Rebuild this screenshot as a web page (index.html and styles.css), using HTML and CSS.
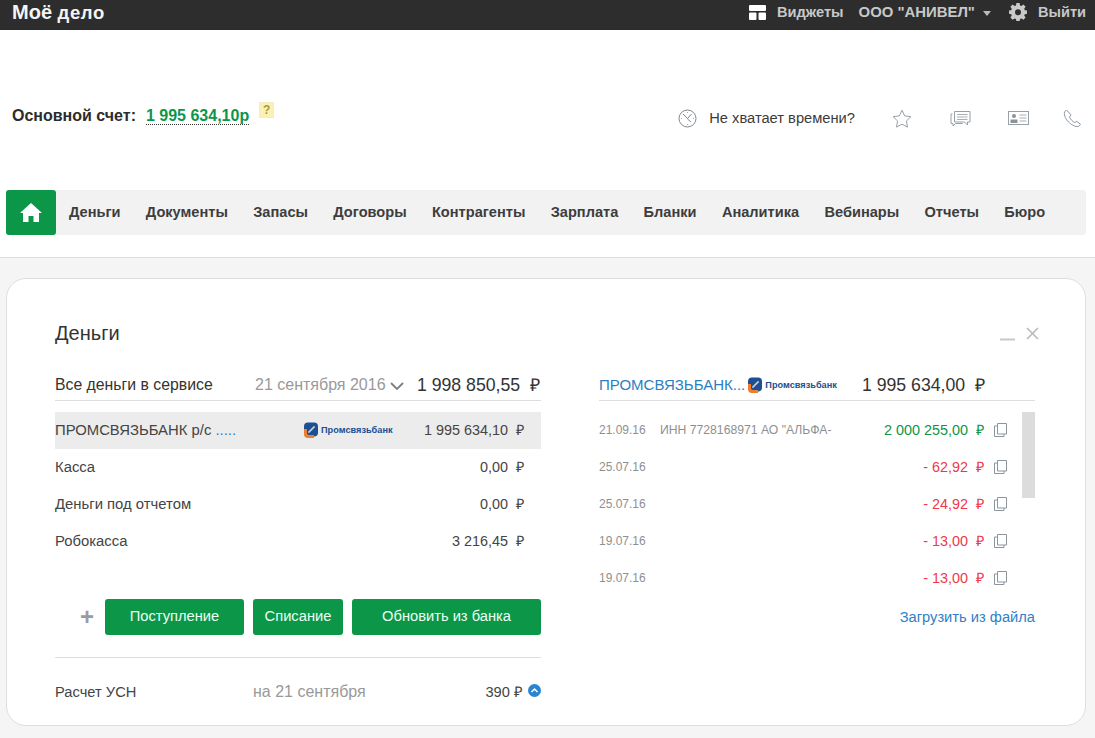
FILE: index.html
```html
<!DOCTYPE html>
<html lang="ru">
<head>
<meta charset="utf-8">
<title>Моё дело</title>
<link rel="stylesheet" href="styles.css">
</head>
<body>
<header class="topbar">
  <div class="logo">Моё <span class="logo-small">дело</span></div>
  <div class="top-actions">
    <svg class="ico-widgets" width="17" height="15" viewBox="0 0 17 15"><rect x="0" y="0" width="17" height="6" rx="1" fill="#fff"/><rect x="0" y="7.500" width="7.500" height="7.500" rx="1" fill="#fff"/><rect x="9.500" y="7.500" width="7.500" height="7.500" rx="1" fill="#fff"/></svg>
    <span class="top-link widgets">Виджеты</span>
    <span class="top-link org">ООО "АНИВЕЛ"</span>
    <svg class="caret" width="8" height="5" viewBox="0 0 8 5"><path d="M0 0h8L4 5z" fill="#bbb"/></svg>
    <svg class="gear" width="18" height="18" viewBox="0 0 18 18"><path fill="#c9c9c9" fill-rule="evenodd" d="M7.400 0h3.200l.4 2.400 1.400.6 2-1.400 2.200 2.200-1.400 2 .6 1.400 2.200.4v3.200l-2.200.4-.6 1.400 1.400 2-2.200 2.200-2-1.400-1.400.6-.4 2.400H7.400l-.4-2.400-1.400-.6-2 1.400-2.200-2.200 1.400-2-.6-1.400L0 10.800V7.600l2.200-.4.6-1.400-1.400-2 2.200-2.200 2 1.400 1.400-.6zM9 6.200a3 3 0 1 0 0 6 3 3 0 0 0 0-6z"/></svg>
    <span class="top-link logout">Выйти</span>
  </div>
</header>

<section class="account">
  <div class="balance">
    <span class="balance-label">Основной счет:</span>
    <span class="balance-value">1 995 634,10р</span>
    <span class="hint">?</span>
  </div>
  <div class="tools">
    <svg class="tool-clock" width="19" height="19" viewBox="0 0 19 19" fill="none" stroke="#7d8791"><circle cx="9.500" cy="9.500" r="8.500"/><path d="M5 5l4.500 4.500L13.500 5M9.500 10l3.500 3"/><path d="M9.500 3v1M9.500 15v1M3 9.500h1M15 9.500h1" stroke="#a5abb1"/></svg>
    <span class="tool-text">Не хватает времени?</span>
    <svg class="tool-star" width="20" height="19" viewBox="0 0 20 19" fill="none" stroke="#98a0a8"><path d="M10 1.200l2.700 5.700 6.200.8-4.500 4.300 1.100 6.100L10 15.200l-5.500 2.900 1.100-6.100L1.100 7.700l6.200-.8z"/></svg>
    <svg class="tool-chat" width="21" height="17" viewBox="0 0 21 17" fill="none" stroke="#98a0a8"><path d="M4.500 1.500h15.500v10.500h-2.500v3l-3-3H4.500z"/><path d="M2.500 4H1v9.500h2v2.500l2.500-2.500h7"/><path d="M7 4.500h10.500M7 7h10.500M7 9.500h10.500" stroke="#a9afb5"/></svg>
    <svg class="tool-card" width="21" height="14" viewBox="0 0 21 14" fill="none" stroke="#98a0a8"><rect x="0.500" y="0.500" width="20" height="13"/><circle cx="6" cy="5" r="2" fill="#8b939b" stroke="none"/><path d="M2.500 12V8.500h7V12z" fill="#8b939b" stroke="none"/><path d="M11.500 4h7M11.500 7h7M11.500 10h7" stroke="#a9afb5"/></svg>
    <svg class="tool-phone" width="19" height="19" viewBox="0 0 19 19" fill="none" stroke="#8e979f"><path d="M3.500 1L1.500 3c-.7 3.800 1.500 7.500 4 10 2.500 2.500 6.500 5 10 4.500l2-2.200-3.700-3-2 1.300c-2-.8-4.500-3.500-5.300-5.700l1.500-2z"/></svg>
  </div>
</section>

<nav class="menu">
  <a class="home"><svg width="22" height="19" viewBox="0 0 22 19"><path fill="#fff" d="M11 0L0 10h3v9h5.500v-6h5v6H19v-9h3z"/></svg></a>
  <a class="menu-item">Деньги</a>
  <a class="menu-item">Документы</a>
  <a class="menu-item">Запасы</a>
  <a class="menu-item">Договоры</a>
  <a class="menu-item">Контрагенты</a>
  <a class="menu-item">Зарплата</a>
  <a class="menu-item">Бланки</a>
  <a class="menu-item">Аналитика</a>
  <a class="menu-item">Вебинары</a>
  <a class="menu-item">Отчеты</a>
  <a class="menu-item">Бюро</a>
</nav>

<main class="content">
  <article class="card">
    <div class="card-head">
      <h2 class="card-title">Деньги</h2>
      <div class="card-controls">
        <svg width="15" height="14" viewBox="0 0 15 14"><path d="M0 12.500h15" stroke="#c8c8c8" stroke-width="2"/></svg>
        <svg width="13" height="13" viewBox="0 0 13 13"><path d="M1 1l11 11M12 1L1 12" stroke="#b9b9b9" stroke-width="1.600"/></svg>
      </div>
    </div>
    <div class="columns">
      <section class="left">
        <div class="col-head">
          <span class="col-title">Все деньги в сервисе</span>
          <span class="col-date">21 сентября 2016</span>
          <svg class="chev" width="14" height="8" viewBox="0 0 14 8" fill="none"><path d="M1 1l6 6 6-6" stroke="#7f7f7f" stroke-width="1.800"/></svg>
          <span class="col-sum">1 998 850,55&nbsp; ₽</span>
        </div>
        <div class="acc-list">
          <div class="acc-row active">
            <span class="acc-name">ПРОМСВЯЗЬБАНК р/с <span class="acc-dots">.....</span></span>
            <span class="bank">
              <svg width="15" height="16" viewBox="0 0 15 16"><rect x="1" y="0.500" width="14" height="14" rx="4" fill="#1d4f91"/><path d="M1 7v5a4 4 0 0 0 4 4h6v-3H6a2 2 0 0 1-2-2V7z" fill="#ef7d2e"/><path d="M5 10h2V8h2V6h2V4" fill="none" stroke="#fff"/></svg>
              <span class="bank-name">Промсвязьбанк</span>
            </span>
            <span class="acc-sum">1 995 634,10&nbsp; ₽</span>
          </div>
          <div class="acc-row"><span class="acc-name">Касса</span><span class="acc-sum">0,00&nbsp; ₽</span></div>
          <div class="acc-row"><span class="acc-name">Деньги под отчетом</span><span class="acc-sum">0,00&nbsp; ₽</span></div>
          <div class="acc-row"><span class="acc-name">Робокасса</span><span class="acc-sum">3 216,45&nbsp; ₽</span></div>
        </div>
        <div class="actions">
          <span class="plus">+</span>
          <a class="btn btn-in">Поступление</a>
          <a class="btn btn-out">Списание</a>
          <a class="btn btn-sync">Обновить из банка</a>
        </div>
        <div class="tax">
          <span class="tax-name">Расчет УСН</span>
          <span class="tax-date">на 21 сентября</span>
          <span class="tax-sum">390&nbsp;₽</span>
          <svg class="tax-toggle" width="13" height="13" viewBox="0 0 13 13"><circle cx="6.500" cy="6.500" r="6.500" fill="#2a84d2"/><path d="M3.500 8l3-3 3 3" fill="none" stroke="#fff" stroke-width="1.500"/></svg>
        </div>
      </section>
      <section class="right">
        <div class="col-head right-head">
          <span class="bank-link">ПРОМСВЯЗЬБАНК...</span>
          <span class="bank">
            <svg width="15" height="16" viewBox="0 0 15 16"><rect x="1" y="0.500" width="14" height="14" rx="4" fill="#1d4f91"/><path d="M1 7v5a4 4 0 0 0 4 4h6v-3H6a2 2 0 0 1-2-2V7z" fill="#ef7d2e"/><path d="M5 10h2V8h2V6h2V4" fill="none" stroke="#fff"/></svg>
            <span class="bank-name">Промсвязьбанк</span>
          </span>
          <span class="col-sum right-sum">1 995 634,00&nbsp; ₽</span>
        </div>
        <div class="ops-wrap">
          <div class="ops">
            <div class="op"><span class="op-date">21.09.16</span><span class="op-desc">ИНН 7728168971 АО "АЛЬФА-</span><span class="op-sum plus-sum">2 000 255,00&nbsp; ₽</span><svg class="copy" width="13" height="14" viewBox="0 0 13 14" fill="none" stroke="#8c949c"><path d="M3.500.5h9V11h-9z"/><path d="M3.500 3H.5v10.500H10V11"/></svg></div>
            <div class="op"><span class="op-date">25.07.16</span><span class="op-desc"></span><span class="op-sum minus-sum">- 62,92&nbsp; ₽</span><svg class="copy" width="13" height="14" viewBox="0 0 13 14" fill="none" stroke="#8c949c"><path d="M3.500.5h9V11h-9z"/><path d="M3.500 3H.5v10.500H10V11"/></svg></div>
            <div class="op"><span class="op-date">25.07.16</span><span class="op-desc"></span><span class="op-sum minus-sum">- 24,92&nbsp; ₽</span><svg class="copy" width="13" height="14" viewBox="0 0 13 14" fill="none" stroke="#8c949c"><path d="M3.500.5h9V11h-9z"/><path d="M3.500 3H.5v10.500H10V11"/></svg></div>
            <div class="op"><span class="op-date">19.07.16</span><span class="op-desc"></span><span class="op-sum minus-sum">- 13,00&nbsp; ₽</span><svg class="copy" width="13" height="14" viewBox="0 0 13 14" fill="none" stroke="#8c949c"><path d="M3.500.5h9V11h-9z"/><path d="M3.500 3H.5v10.500H10V11"/></svg></div>
            <div class="op"><span class="op-date">19.07.16</span><span class="op-desc"></span><span class="op-sum minus-sum">- 13,00&nbsp; ₽</span><svg class="copy" width="13" height="14" viewBox="0 0 13 14" fill="none" stroke="#8c949c"><path d="M3.500.5h9V11h-9z"/><path d="M3.500 3H.5v10.500H10V11"/></svg></div>
          </div>
          <div class="scroll"><div class="scroll-thumb"></div></div>
        </div>
        <a class="upload">Загрузить из файла</a>
      </section>
    </div>
  </article>
</main>
</body>
</html>
```

FILE: styles.css
```css
* { box-sizing: border-box; }
html, body { margin: 0; padding: 0; }
body {
  height: 738px;
  overflow: hidden;
  background: #fff;
  font-family: "Liberation Sans", Arial, sans-serif;
  color: #333;
  font-size: 14px;
}
svg { display: block; flex: none; }

.topbar {
  height: 30px;
  background: #2d2d2d;
  display: flex;
  align-items: center;
  justify-content: space-between;
  padding: 0 9px 6px 12px;
  color: #ccc;
}
.logo { color: #f4f4f4; font-weight: bold; font-size: 20px; line-height: 24px; white-space: nowrap; }
.logo-small { font-size: 18.5px; letter-spacing: 0.6px; }
.top-actions { display: flex; align-items: center; }
.top-link { font-weight: bold; font-size: 14.6px; color: #c8c8c8; white-space: nowrap; }
.org { font-size: 14.9px; }
.ico-widgets { margin-right: 11px; }
.widgets { margin-right: 15px; }
.caret { margin: 2px 0 0 8px; }
.gear { margin: 0 11px 0 18px; }

.account {
  height: 160px;
  display: flex;
  align-items: center;
  justify-content: space-between;
  padding: 0 13px 0 12px;
}
.balance { display: flex; align-items: center; margin-top: 12px; }
.balance-label { font-weight: bold; font-size: 16px; color: #2c2c2c; }
.balance-value {
  margin-left: 10px;
  font-weight: bold;
  font-size: 16px;
  color: #0d964a;
  border-bottom: 1px dotted #333;
  line-height: 17px;
}
.hint {
  margin: -12px 0 0 10px;
  width: 15px;
  height: 16px;
  background: #fbf1b5;
  border: 1px solid #f3eccb;
  color: #a8993f;
  font-weight: bold;
  font-size: 12px;
  line-height: 14px;
  text-align: center;
}
.tools { display: flex; align-items: center; margin-top: 16px; }
.tool-text { margin-left: 12px; font-size: 14.7px; color: #3c3c3c; white-space: nowrap; }
.tool-star { margin-left: 37px; }
.tool-chat { margin-left: 38px; }
.tool-card { margin-left: 37px; }
.tool-phone { margin-left: 34px; }

.menu {
  margin: 0 9px 0 6px;
  height: 45px;
  background: #f2f2f2;
  border-radius: 3px;
  display: flex;
  align-items: center;
}
.home {
  width: 50px;
  height: 45px;
  background: #0c9648;
  border-radius: 3px;
  display: flex;
  align-items: center;
  justify-content: center;
  margin-right: 13px;
}
.menu-item { font-weight: bold; font-size: 14.6px; color: #3d3d3d; margin: -2px 25.3px 0 0; white-space: nowrap; }

.content {
  margin-top: 22px;
  border-top: 1px solid #dedede;
  background: #f5f5f5;
  padding: 20px 9px 0 6px;
  height: 481px;
}
.card {
  height: 448px;
  background: #fff;
  border: 1px solid #dedede;
  border-radius: 20px;
  padding: 0 50px 0 48px;
}
.card-head {
  height: 82px;
  display: flex;
  justify-content: space-between;
  align-items: flex-start;
  padding-top: 42px;
}
.card-title { margin: 0; font-weight: normal; font-size: 20px; line-height: 24px; color: #333; }
.card-controls { display: flex; gap: 11px; align-items: flex-start; margin: 6px -4px 0 0; }

.columns { display: flex; justify-content: space-between; }
.left { width: 486px; }
.right { width: 436px; }

.col-head {
  height: 40px;
  padding-top: 7px;
  display: flex;
  align-items: center;
  border-bottom: 1px solid #dedede;
  white-space: nowrap;
}
.col-title { font-size: 15.8px; color: #333; width: 200px; margin-top: 2px; }
.col-date { font-size: 16px; color: #999; margin-top: 2px; }
.chev { margin: 3px 0 0 4px; }
.col-sum { margin-left: auto; padding-right: 1px; font-size: 17.7px; color: #333; }

.acc-list { margin-top: 11px; }
.acc-row {
  height: 37px;
  display: flex;
  align-items: center;
  padding: 0 17px 2px 0;
  color: #444;
}
.acc-row.active { background: #ececec; }
.acc-name { white-space: nowrap; width: 248px; font-size: 14.85px; }
.acc-dots { color: #2a7fc4; }
.acc-sum { margin-left: auto; white-space: nowrap; font-size: 14.4px; }

.bank { display: flex; align-items: center; gap: 3px; }
.bank-name { font-size: 9.2px; font-weight: bold; color: #1d4f91; white-space: nowrap; }

.actions { display: flex; align-items: center; justify-content: flex-end; margin-top: 39px; gap: 9px; }
.plus { font-size: 24px; font-weight: bold; color: #9b9b9b; line-height: 24px; margin-right: 2px; }
.btn {
  height: 36px;
  padding-bottom: 2px;
  background: #0c9648;
  border-radius: 3px;
  color: #eafff3;
  font-size: 14.7px;
  display: flex;
  align-items: center;
  justify-content: center;
}
.btn-in { width: 139px; }
.btn-out { width: 90px; }
.btn-sync { width: 189px; }

.tax {
  margin-top: 22px;
  border-top: 1px solid #dedede;
  height: 68px;
  display: flex;
  align-items: center;
  white-space: nowrap;
}
.tax-name { width: 198px; font-size: 14.7px; color: #444; }
.tax-date { font-size: 16px; color: #999; }
.tax-sum { margin-left: auto; font-size: 14.7px; color: #444; margin-top: -2px; }
.tax-toggle { margin: -2px 0 0 5px; }

.bank-link { font-size: 15px; color: #2a7fc4; margin-right: 2px; }
.right-head .bank { margin-top: 1px; }
.right-sum { padding-right: 50px; }

.ops-wrap { display: flex; margin-top: 11px; }
.ops { flex: 1; }
.scroll { width: 13px; margin-left: 15px; }
.scroll-thumb { height: 86px; background: #dcdcdc; }
.op {
  height: 37px;
  padding-bottom: 2px;
  display: flex;
  align-items: center;
  white-space: nowrap;
}
.op-date { font-size: 12px; color: #8f8f8f; width: 61px; }
.op-desc { font-size: 12.2px; color: #8f8f8f; }
.op-sum { margin-left: auto; font-size: 14.4px; }
.plus-sum { color: #0c9648; }
.minus-sum { color: #f0384a; }
.copy { margin-left: 10px; }

.upload { display: block; margin-top: 2px; text-align: right; font-size: 14.7px; color: #2f80c8; line-height: 36px; }
```
